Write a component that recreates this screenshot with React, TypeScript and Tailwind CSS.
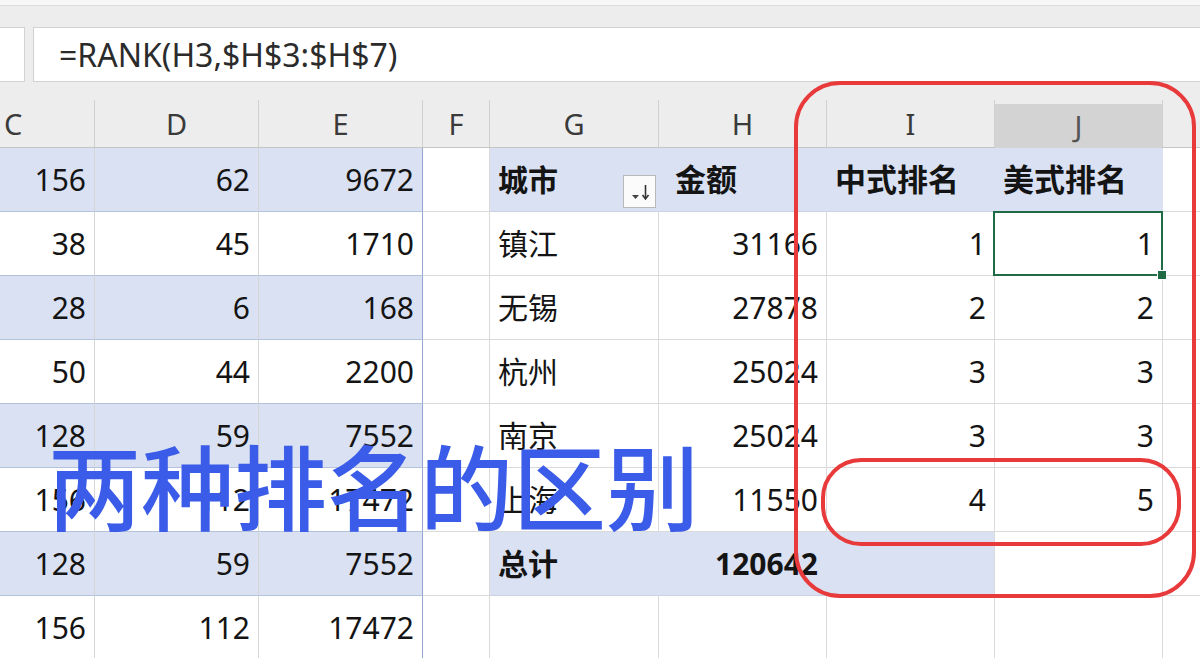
import React from 'react';

// 列宽（C 列左侧被截断，K 列右侧被截断）
const COLS = [
  { key: 'C', w: 'w-[95px]' },
  { key: 'D', w: 'w-[164px]' },
  { key: 'E', w: 'w-[164px]' },
  { key: 'F', w: 'w-[67px]' },
  { key: 'G', w: 'w-[169px]' },
  { key: 'H', w: 'w-[168px]' },
  { key: 'I', w: 'w-[168px]' },
  { key: 'J', w: 'w-[168px]' },
  { key: 'K', w: 'w-[37px]' },
];

const LEFT = [
  [156, 62, 9672],
  [38, 45, 1710],
  [28, 6, 168],
  [50, 44, 2200],
  [128, 59, 7552],
  [156, 112, 17472],
  [128, 59, 7552],
  [156, 112, 17472],
];

const RIGHT: (string | number)[][] = [
  ['城市', '金额', '中式排名', '美式排名'],
  ['镇江', 31166, 1, 1],
  ['无锡', 27878, 2, 2],
  ['杭州', 25024, 3, 3],
  ['南京', 25024, 3, 3],
  ['上海', 11550, 4, 5],
  ['总计', 120642, '', ''],
  ['', '', '', ''],
];

function SortButton() {
  return (
    <div className="absolute right-[2px] bottom-[3px] w-[33px] h-[33px] bg-[#fbfbfb] border border-[#b9b9b9]">
      <svg width="31" height="31" viewBox="0 0 31 31" className="block">
        <path d="M8 19 L15 19 L11.5 23 Z" fill="#444" />
        <path d="M21.5 9 V22" stroke="#333" strokeWidth="1.6" />
        <path d="M18.5 19 L21.5 23 L24.5 19" stroke="#333" strokeWidth="1.6" fill="none" />
      </svg>
    </div>
  );
}

function LeftRow({ vals, i }: { vals: number[]; i: number }) {
  const blue = i % 2 === 0;
  const bg = blue ? 'bg-[#d9e1f2]' : 'bg-white';
  return (
    <>
      <div className={`w-[95px] ${bg} border-r border-b border-r-[#d6d6d6] border-b-[#b4c2dc] flex items-center justify-end pr-2`}>
        {vals[0]}
      </div>
      <div className={`w-[164px] ${bg} border-r border-b border-r-[#d6d6d6] border-b-[#b4c2dc] flex items-center justify-end pr-2`}>
        {vals[1]}
      </div>
      <div className={`w-[164px] ${bg} border-r border-b border-r-[#93a8d2] border-b-[#b4c2dc] flex items-center justify-end pr-2`}>
        {vals[2]}
      </div>
    </>
  );
}

function RightRow({ vals, i }: { vals: (string | number)[]; i: number }) {
  const head = i === 0;
  const total = i === 6;
  const blueG = head || total;
  return (
    <>
      <div className="w-[67px] bg-white border-r border-b border-[#dadada]" />
      <div
        className={
          blueG
            ? 'relative w-[169px] bg-[#d9e1f2] border-r border-b border-r-[#d9e1f2] border-b-[#c9d2e4] flex items-center pl-2 font-bold'
            : 'relative w-[169px] bg-white border-r border-b border-[#dadada] flex items-center pl-2'
        }
      >
        {vals[0]}
        {head && <SortButton />}
      </div>
      <div
        className={
          head
            ? 'w-[168px] bg-[#d9e1f2] border-r border-b border-r-[#d9e1f2] border-b-[#c9d2e4] flex items-center pl-[16px] font-bold text-[31px]'
            : total
            ? 'w-[168px] bg-[#d9e1f2] border-r border-b border-r-[#d9e1f2] border-b-[#c9d2e4] flex items-center justify-end pr-2 font-bold'
            : 'w-[168px] bg-white border-r border-b border-[#dadada] flex items-center justify-end pr-2'
        }
      >
        {vals[1]}
      </div>
      <div
        className={
          head
            ? 'w-[168px] bg-[#d9e1f2] border-r border-b border-r-[#d9e1f2] border-b-[#c9d2e4] flex items-center pl-2 font-bold text-[31px]'
            : total
            ? 'w-[168px] bg-[#d9e1f2] border-r border-b border-r-[#dadada] border-b-[#c9d2e4] flex items-center justify-end pr-2'
            : 'w-[168px] bg-white border-r border-b border-[#dadada] flex items-center justify-end pr-2'
        }
      >
        {vals[2]}
      </div>
      <div
        className={
          head
            ? 'relative w-[168px] bg-[#d9e1f2] border-r border-b border-r-[#d9e1f2] border-b-[#c9d2e4] flex items-center pl-2 font-bold text-[31px]'
            : 'relative w-[168px] bg-white border-r border-b border-[#dadada] flex items-center justify-end pr-2'
        }
      >
        {vals[3]}
        {i === 1 && (
          <div className="absolute z-10 -left-[2px] -top-[1px] -right-[1px] -bottom-[1px] border-2 border-[#1f6b45]">
            <div className="absolute -right-[6px] -bottom-[6px] w-[10px] h-[10px] bg-[#1f6b45] border border-white" />
          </div>
        )}
      </div>
      <div className="w-[37px] bg-white border-b border-[#dadada]" />
    </>
  );
}

export default function App() {
  return (
    <div className="relative w-[1200px] h-[658px] overflow-hidden bg-white text-[#141414] font-['Noto_Sans','Noto_Sans_CJK_SC',sans-serif]">
      {/* 编辑栏 */}
      <div className="h-[100px] bg-[#ededed] flex flex-col">
        <div className="h-[6px] bg-[#f7f7f7] border-b border-[#dcdcdc]" />
        <div className="mt-[21px] h-[55px] flex gap-[8px]">
          <div className="w-[25px] bg-white border-y border-r border-[#d2d2d2]" />
          <div className="flex-1 bg-white border-y border-l border-[#d2d2d2] flex items-center pl-[25px] text-[32px] text-[#2b2b2b]">
            =RANK(H3,$H$3:$H$7)
          </div>
        </div>
      </div>

      {/* 列标题 */}
      <div className="h-[48px] flex bg-[#ededed] text-[29px] text-[#3a3a3a] border-b border-[#c6c6c6]">
        {COLS.map((c) =>
          c.key === 'J' ? (
            <div key={c.key} className={`${c.w} border-r border-[#d0d0d0] pt-[4px] flex flex-col`}>
              <div className="flex-1 bg-[#d3d3d3] border-b-2 border-[#1f6b45] flex items-center justify-center text-[#555]">
                J
              </div>
            </div>
          ) : c.key === 'C' ? (
            <div key={c.key} className={`${c.w} border-r border-[#d0d0d0] flex items-center pl-[4px]`}>
              C
            </div>
          ) : (
            <div key={c.key} className={`${c.w} ${c.key === 'K' ? '' : 'border-r border-[#d0d0d0]'} flex items-center justify-center`}>
              {c.key === 'K' ? '' : c.key}
            </div>
          )
        )}
      </div>

      {/* 数据区 */}
      <div className="flex flex-col text-[30px]">
        {LEFT.map((vals, i) => (
          <div key={i} className={`h-[64px] flex shrink-0 ${i === 1 ? 'relative z-10' : ''}`}>
            <LeftRow vals={vals} i={i} />
            <RightRow vals={RIGHT[i]} i={i} />
          </div>
        ))}
      </div>

      {/* 红色圈注 */}
      <div className="absolute z-20 left-[794px] top-[81px] w-[402px] h-[517px] border-4 border-[#e8393b] rounded-[46px]" />
      <div className="absolute z-20 left-[821px] top-[458px] w-[360px] h-[88px] border-4 border-[#e8393b] rounded-[40px]" />

      {/* 标题文字 */}
      <div className="absolute z-20 left-[48px] top-[437px] text-[93px] leading-none font-medium text-[#3b5ce8] font-['Noto_Sans_CJK_SC',sans-serif] whitespace-nowrap">
        两种排名的区别
      </div>
    </div>
  );
}
